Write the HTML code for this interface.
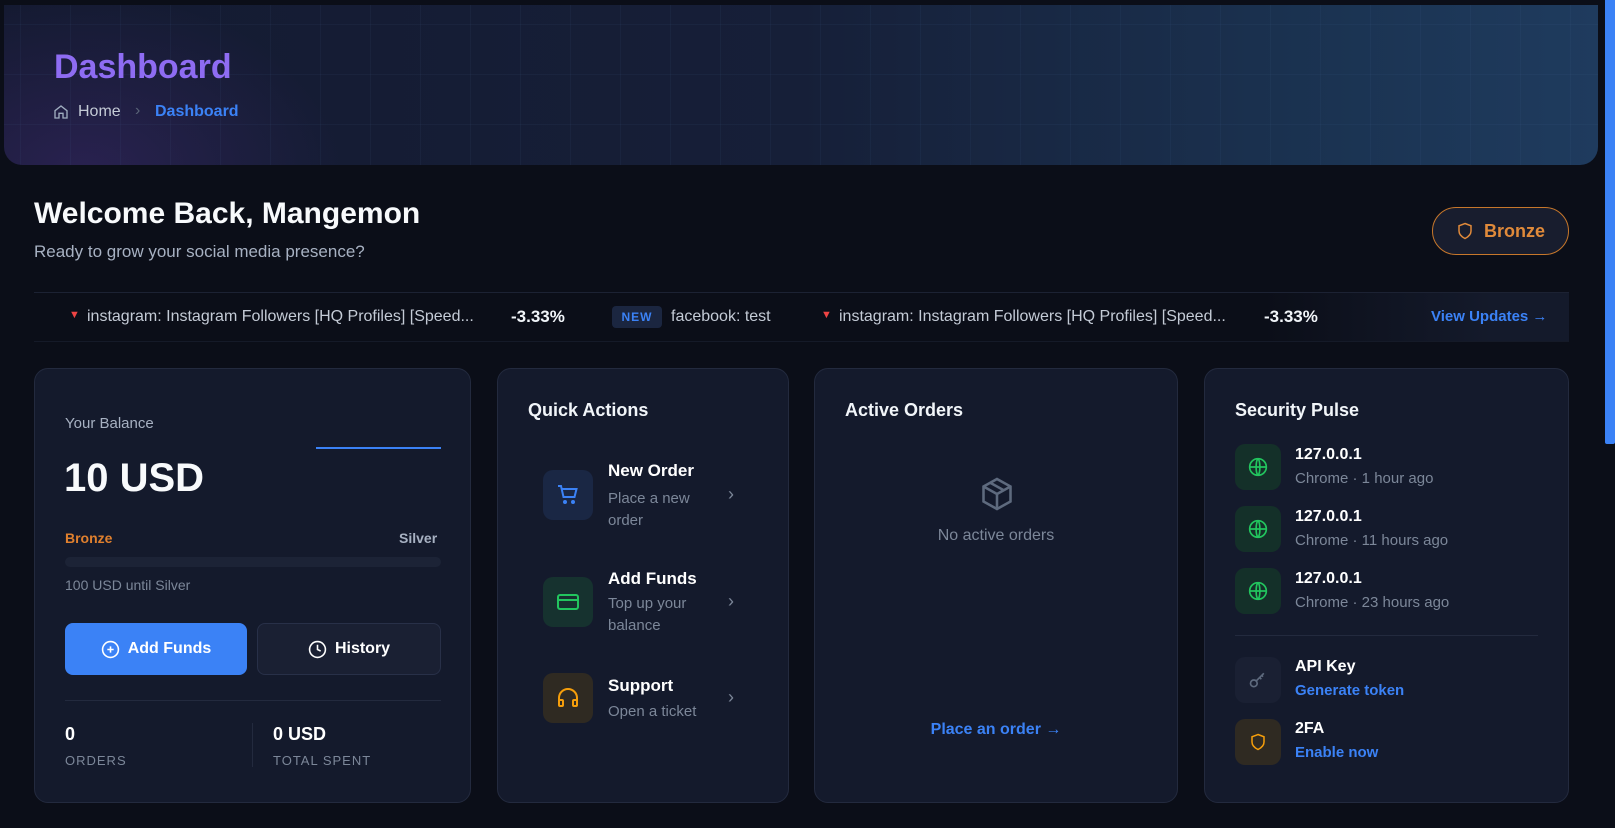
<!DOCTYPE html>
<html><head><meta charset="utf-8"><style>
*{box-sizing:border-box;margin:0;padding:0}
body{width:1615px;height:828px;background:#0b0e18;font-family:"Liberation Sans",sans-serif;position:relative;overflow:hidden;color:#fff}
.a{position:absolute;white-space:nowrap}
.hero{position:absolute;left:4px;top:5px;width:1594px;height:160px;border-radius:0 0 18px 18px;background:radial-gradient(ellipse 260px 180px at 80px 170px,rgba(90,50,150,.3),transparent),linear-gradient(90deg,#141a31 0%,#161f38 50%,#1b3453 85%,#1f3b5e 100%);overflow:hidden}
.grid{position:absolute;inset:0;background-image:linear-gradient(rgba(80,120,170,.07) 1px,transparent 1px),linear-gradient(90deg,rgba(80,120,170,.07) 1px,transparent 1px);background-size:50px 50px;background-position:16px 19px}
.card{position:absolute;top:368px;height:435px;background:#141a2c;border:1px solid #232a3e;border-radius:14px}
.t18{font-size:18px;font-weight:bold;color:#f1f5f9}
.sub{color:#7c8799}
.ib{position:absolute;width:50px;height:50px;border-radius:10px;display:flex;align-items:center;justify-content:center}
.sb{position:absolute;width:46px;height:46px;border-radius:10px;display:flex;align-items:center;justify-content:center}
.blue{color:#3b82f6}
</style></head><body>
<div class="hero"><div class="grid"></div></div>
<div class="a" style="left:54px;top:48px;font-size:34px;font-weight:bold;color:#8e6cf2">Dashboard</div>
<svg class="a" style="left:53px;top:104px" width="16" height="16" viewBox="0 0 24 24" fill="none" stroke="#a0aec0" stroke-width="2"><path d="M3 10l9-7 9 7v11h-6v-7h-6v7H3z"/></svg>
<div class="a" style="left:78px;top:103px;font-size:16px;color:#c4cbd6">Home</div>
<div class="a" style="left:135px;top:102px;font-size:16px;color:#5a6478">›</div>
<div class="a" style="left:155px;top:103px;font-size:16px;font-weight:bold;color:#3b82f6">Dashboard</div>

<div class="a" style="left:34px;top:197px;font-size:30px;font-weight:bold;color:#f8fafc">Welcome Back, Mangemon</div>
<div class="a" style="left:34px;top:242px;font-size:17px;color:#a7b1c2">Ready to grow your social media presence?</div>
<div class="a" style="left:1432px;top:207px;width:137px;height:48px;border:1.5px solid #c7772b;border-radius:24px;background:#181d2e;color:#e08a3a;font-size:18px;font-weight:bold;display:flex;align-items:center;justify-content:center;gap:10px">
<svg width="18" height="20" viewBox="0 0 24 24" fill="none" stroke="#e08a3a" stroke-width="2"><path d="M12 2l8 3v7c0 5-4 8-8 10-4-2-8-5-8-10V5z"/></svg>Bronze</div>

<div class="a" style="left:34px;top:292px;width:1535px;height:50px;border-top:1px solid #1c2233;border-bottom:1px solid #151a28;background:linear-gradient(90deg,#0b0e18 80%,#141a2b 95%)"></div>
<div class="a" style="left:69px;top:309px;font-size:11px;color:#ef4444">▼</div>
<div class="a" style="left:87px;top:308px;font-size:16px;color:#c4cbd6">instagram: Instagram Followers [HQ Profiles] [Speed...</div>
<div class="a" style="left:511px;top:307px;font-size:17px;font-weight:bold;color:#f1f5f9">-3.33%</div>
<div class="a" style="left:612px;top:306px;width:50px;height:22px;border-radius:4px;background:#1b2640;color:#3b82f6;font-size:12px;font-weight:bold;text-align:center;line-height:22px;letter-spacing:1px">NEW</div>
<div class="a" style="left:671px;top:308px;font-size:16px;color:#c4cbd6">facebook: test</div>
<div class="a" style="left:821px;top:309px;font-size:11px;color:#ef4444">▼</div>
<div class="a" style="left:839px;top:308px;font-size:16px;color:#c4cbd6">instagram: Instagram Followers [HQ Profiles] [Speed...</div>
<div class="a" style="left:1264px;top:307px;font-size:17px;font-weight:bold;color:#f1f5f9">-3.33%</div>
<div class="a blue" style="left:1431px;top:308px;font-size:15px;font-weight:bold">View Updates →</div>

<!-- card 1 -->
<div class="card" style="left:34px;width:437px"></div>
<div class="a" style="left:65px;top:415px;font-size:15px;color:#a7b1c2">Your Balance</div>
<div class="a" style="left:316px;top:447px;width:125px;height:2px;background:#3b82f6"></div>
<div class="a" style="left:64px;top:456px;font-size:40px;font-weight:bold;color:#f8fafc">10 USD</div>
<div class="a" style="left:65px;top:530px;font-size:14px;font-weight:bold;color:#e0802e">Bronze</div>
<div class="a" style="left:399px;top:530px;font-size:14px;font-weight:bold;color:#a7b1c2">Silver</div>
<div class="a" style="left:65px;top:557px;width:376px;height:10px;border-radius:5px;background:#1c2336"></div>
<div class="a" style="left:65px;top:577px;font-size:14px;color:#7c8799">100 USD until Silver</div>
<div class="a" style="left:65px;top:623px;width:182px;height:52px;border-radius:8px;background:#3b82f6;display:flex;align-items:center;justify-content:center;gap:8px;font-size:16px;font-weight:bold">
<svg width="19" height="19" viewBox="0 0 24 24" fill="none" stroke="#fff" stroke-width="2"><circle cx="12" cy="12" r="10"/><path d="M12 8v8M8 12h8"/></svg>Add Funds</div>
<div class="a" style="left:257px;top:623px;width:184px;height:52px;border-radius:8px;background:#1a2033;border:1px solid #283048;display:flex;align-items:center;justify-content:center;gap:8px;font-size:16px;font-weight:bold">
<svg width="19" height="19" viewBox="0 0 24 24" fill="none" stroke="#fff" stroke-width="2"><circle cx="12" cy="12" r="10"/><path d="M12 6v6l4 2"/></svg>History</div>
<div class="a" style="left:65px;top:700px;width:376px;height:1px;background:#232a3e"></div>
<div class="a" style="left:65px;top:724px;font-size:18px;font-weight:bold">0</div>
<div class="a" style="left:65px;top:753px;font-size:13px;color:#7c8799;letter-spacing:1px">ORDERS</div>
<div class="a" style="left:252px;top:723px;width:1px;height:44px;background:#232a3e"></div>
<div class="a" style="left:273px;top:724px;font-size:18px;font-weight:bold">0 USD</div>
<div class="a" style="left:273px;top:753px;font-size:13px;color:#7c8799;letter-spacing:1px">TOTAL SPENT</div>

<!-- card 2 -->
<div class="card" style="left:497px;width:292px"></div>
<div class="a t18" style="left:528px;top:400px">Quick Actions</div>
<div class="ib" style="left:543px;top:470px;background:#1a2744"><svg width="24" height="24" viewBox="0 0 24 24" fill="none" stroke="#3b82f6" stroke-width="2"><path d="M2 3h3l2.5 11h11l2-8H6"/><circle cx="9" cy="19" r="1"/><circle cx="17" cy="19" r="1"/></svg></div>
<div class="a" style="left:608px;top:461px;font-size:17px;font-weight:bold">New Order</div>
<div class="a sub" style="left:608px;top:488px;font-size:15px;line-height:22px">Place a new<br>order</div>
<div class="a" style="left:728px;top:484px;font-size:18px;color:#7c8799">›</div>
<div class="ib" style="left:543px;top:577px;background:#16322f"><svg width="24" height="24" viewBox="0 0 24 24" fill="none" stroke="#22c55e" stroke-width="2"><rect x="2" y="5" width="20" height="14" rx="2"/><path d="M2 10h20"/></svg></div>
<div class="a" style="left:608px;top:569px;font-size:17px;font-weight:bold">Add Funds</div>
<div class="a sub" style="left:608px;top:593px;font-size:15px;line-height:22px">Top up your<br>balance</div>
<div class="a" style="left:728px;top:591px;font-size:18px;color:#7c8799">›</div>
<div class="ib" style="left:543px;top:673px;background:#2f2a22"><svg width="24" height="24" viewBox="0 0 24 24" fill="none" stroke="#f59e0b" stroke-width="2"><path d="M3 18v-6a9 9 0 0 1 18 0v6"/><rect x="3" y="14" width="4" height="6" rx="1"/><rect x="17" y="14" width="4" height="6" rx="1"/></svg></div>
<div class="a" style="left:608px;top:676px;font-size:17px;font-weight:bold">Support</div>
<div class="a sub" style="left:608px;top:703px;font-size:15px">Open a ticket</div>
<div class="a" style="left:728px;top:687px;font-size:18px;color:#7c8799">›</div>

<!-- card 3 -->
<div class="card" style="left:814px;width:364px"></div>
<div class="a t18" style="left:845px;top:400px">Active Orders</div>
<svg class="a" style="left:979px;top:475px" width="36" height="38" viewBox="0 0 24 24" fill="none" stroke="#5e6a7e" stroke-width="1.7"><path d="M12 2l9 5v10l-9 5-9-5V7z"/><path d="M3 7l9 5 9-5M12 12v10M7.5 4.5l9 5"/></svg>
<div class="a" style="left:814px;width:364px;text-align:center;top:527px;font-size:16px;color:#7c8799">No active orders</div>
<div class="a blue" style="left:814px;width:364px;text-align:center;top:721px;font-size:16px;font-weight:bold">Place an order →</div>

<!-- card 4 -->
<div class="card" style="left:1204px;width:365px"></div>
<div class="a t18" style="left:1235px;top:400px">Security Pulse</div>
<div class="sb" style="left:1235px;top:444px;background:#143029"><svg width="20" height="20" viewBox="0 0 24 24" fill="none" stroke="#22c55e" stroke-width="2"><circle cx="12" cy="12" r="10"/><path d="M2 12h20M12 2c3 3 3 17 0 20M12 2c-3 3-3 17 0 20"/></svg></div>
<div class="a" style="left:1295px;top:446px;font-size:16px;font-weight:bold">127.0.0.1</div>
<div class="a sub" style="left:1295px;top:470px;font-size:15px">Chrome · 1 hour ago</div>
<div class="sb" style="left:1235px;top:506px;background:#143029"><svg width="20" height="20" viewBox="0 0 24 24" fill="none" stroke="#22c55e" stroke-width="2"><circle cx="12" cy="12" r="10"/><path d="M2 12h20M12 2c3 3 3 17 0 20M12 2c-3 3-3 17 0 20"/></svg></div>
<div class="a" style="left:1295px;top:508px;font-size:16px;font-weight:bold">127.0.0.1</div>
<div class="a sub" style="left:1295px;top:532px;font-size:15px">Chrome · 11 hours ago</div>
<div class="sb" style="left:1235px;top:568px;background:#143029"><svg width="20" height="20" viewBox="0 0 24 24" fill="none" stroke="#22c55e" stroke-width="2"><circle cx="12" cy="12" r="10"/><path d="M2 12h20M12 2c3 3 3 17 0 20M12 2c-3 3-3 17 0 20"/></svg></div>
<div class="a" style="left:1295px;top:570px;font-size:16px;font-weight:bold">127.0.0.1</div>
<div class="a sub" style="left:1295px;top:594px;font-size:15px">Chrome · 23 hours ago</div>
<div class="a" style="left:1235px;top:635px;width:303px;height:1px;background:#232a3e"></div>
<div class="sb" style="left:1235px;top:657px;background:#1a2033"><svg width="20" height="20" viewBox="0 0 24 24" fill="none" stroke="#5e6a7e" stroke-width="2"><circle cx="7" cy="16" r="4"/><path d="M10 13l9-9M16 6l2 2M14 9l2 2"/></svg></div>
<div class="a" style="left:1295px;top:658px;font-size:16px;font-weight:bold">API Key</div>
<div class="a blue" style="left:1295px;top:682px;font-size:15px;font-weight:bold">Generate token</div>
<div class="sb" style="left:1235px;top:719px;background:#2f2a22"><svg width="18" height="20" viewBox="0 0 24 24" fill="none" stroke="#f59e0b" stroke-width="2"><path d="M12 2l8 3v7c0 5-4 8-8 10-4-2-8-5-8-10V5z"/></svg></div>
<div class="a" style="left:1295px;top:720px;font-size:16px;font-weight:bold">2FA</div>
<div class="a blue" style="left:1295px;top:744px;font-size:15px;font-weight:bold">Enable now</div>

<div class="a" style="left:1605px;top:0;width:10px;height:444px;background:#3b82f6;border-radius:0 0 2px 2px"></div>
</body></html>
